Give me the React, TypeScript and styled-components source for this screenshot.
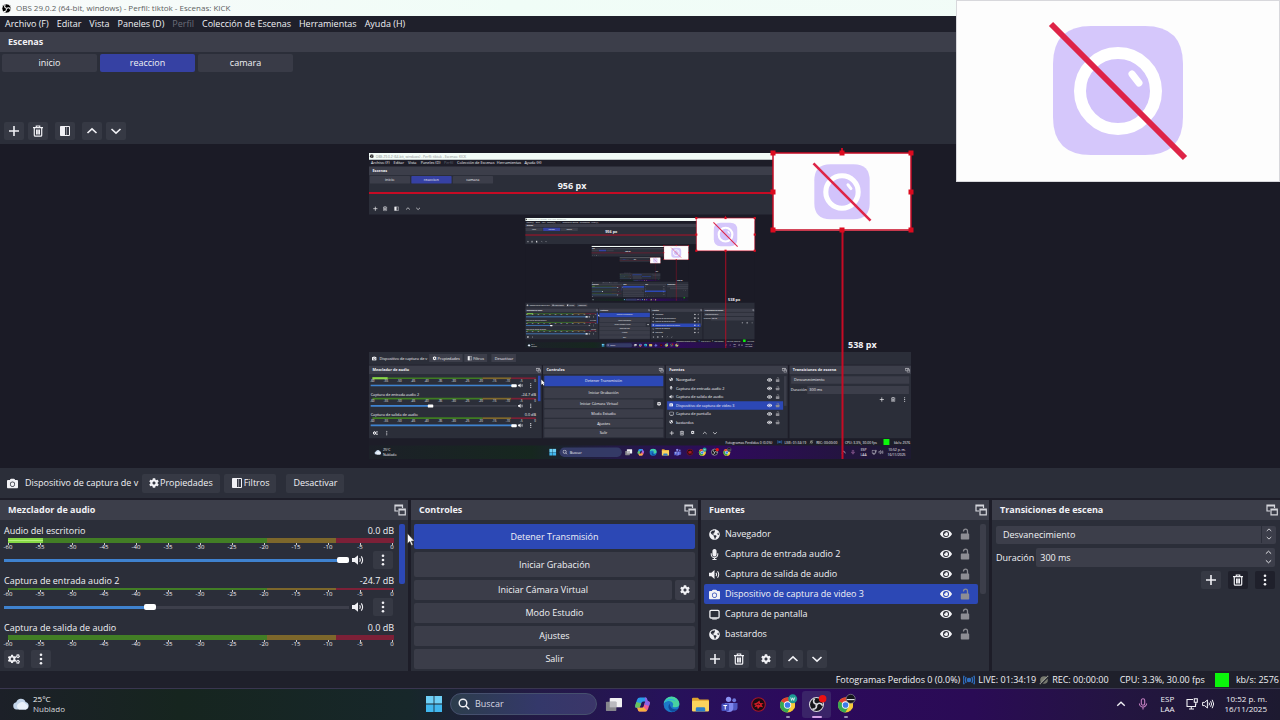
import React, { CSSProperties, ComponentProps, SVGProps, createContext, useContext } from "react";
import styled, { createGlobalStyle, css } from "styled-components";
import { FaCamera, FaCog, FaCogs, FaEye, FaGlobeAmericas, FaMicrophone } from "react-icons/fa";

const c = {
  page: "#1d1d28",
  stage: "#1b1b26",
  dock: "#2b2e39",
  title: "#3c3e4a",
  button: "#3b3d49",
  tool: "#363944",
  accent: "#2c48b5",
  text: "#f1f1f5",
  red: "#c60b24",
};
const uiFont = `"Open Sans", "Noto Sans", sans-serif`;

const GlobalStyle = createGlobalStyle`
  * { box-sizing: border-box; }
  body { margin: 0; background: ${c.page}; color: ${c.text}; font: 9px/12px ${uiFont}; }
  button, input, select { font: inherit; color: inherit; margin: 0; }
  button { border: 0; padding: 0; cursor: pointer; }
  svg { display: block; flex: none; }
`;

/* ---------- icons ---------- */

type IconProps = SVGProps<SVGSVGElement>;
const Icon = ({ size = 12, children, ...rest }: IconProps & { size?: number }) => (
  <svg width={size} height={size} viewBox="0 0 12 12" fill="none" stroke="currentColor" strokeWidth="1.4" aria-hidden="true" {...rest}>
    {children}
  </svg>
);
const PlusIcon = (p: IconProps) => <Icon {...p}><path d="M6 1v10M1 6h10" strokeWidth="1.6" /></Icon>;
const TrashIcon = (p: IconProps) => (
  <Icon {...p}><path d="M1 2.6h10M4.3 2.4V1h3.4v1.4M2.3 3v7.2q0 1 1 1h5.4q1 0 1-1V3M4.6 4.6v4.8M6 4.6v4.8M7.4 4.6v4.8" strokeWidth="1.2" /></Icon>
);
const FilterIcon = (p: IconProps) => (
  <Icon {...p}>
    <path d="M1.5 1.5h9v9h-9z" strokeWidth="1" />
    <path d="M1.5 1.5H6v9H1.5z" fill="currentColor" stroke="none" />
    <path d="M3 3.5v5M7.5 2v8" strokeWidth=".8" opacity=".5" />
  </Icon>
);
const UpIcon = (p: IconProps) => <Icon {...p}><path d="M1.5 8 6 3.8 10.5 8" strokeWidth="1.6" /></Icon>;
const DownIcon = (p: IconProps) => <Icon {...p}><path d="M1.5 4 6 8.2 10.5 4" strokeWidth="1.6" /></Icon>;
const DotsIcon = (p: IconProps) => (
  <Icon {...p}><g fill="currentColor" stroke="none"><circle cx="6" cy="1.8" r="1.3" /><circle cx="6" cy="6" r="1.3" /><circle cx="6" cy="10.2" r="1.3" /></g></Icon>
);
const PopoutIcon = (p: IconProps) => (
  <Icon {...p}><path d="M4 7H1V1h7.5v3M1 2h7.5M5 5h6.3v5.8H5zM5 6h6.3" strokeWidth="1.2" stroke="#d5d6dc" /></Icon>
);
const LockIcon = (p: IconProps) => (
  <Icon {...p}><path d="M4.5 3.6V3.2a2 2 0 0 1 4 0V6" stroke="#8d8d94" strokeWidth="1.3" /><rect x="1.8" y="5.6" width="8.4" height="6" rx=".8" fill="#8d8d94" stroke="none" /></Icon>
);
const DisplayIcon = (p: IconProps) => (
  <Icon {...p}><rect x="1" y="1.4" width="10" height="8.4" rx="1.2" /><path d="M3.5 11h5" strokeWidth="1" /></Icon>
);
const SpeakerIcon = (p: IconProps) => (
  <Icon {...p}><path d="M0 4h2.6L6 1.2v9.6L2.6 8H0z" fill="currentColor" stroke="none" /><path d="M7.6 4.2q1.3 1.8 0 3.6M9.3 2.4q2.6 3.6 0 7.2" strokeWidth="1.1" /></Icon>
);
const SearchIcon = (p: IconProps) => <Icon {...p}><circle cx="5" cy="5" r="3.8" /><path d="m7.8 7.8 3.4 3.4" /></Icon>;
const LiveIcon = (p: IconProps) => (
  <Icon {...p} stroke="#2f6fc0"><circle cx="6" cy="6" r="1.6" fill="#2f6fc0" /><path d="M3.2 3.2q-1.8 2.8 0 5.6M8.8 3.2q1.8 2.8 0 5.6M1.2 1.8q-2.2 4.2 0 8.4M10.8 1.8q2.2 4.2 0 8.4" /></Icon>
);
const IdleIcon = (p: IconProps) => (
  <Icon {...p}><circle cx="6" cy="6" r="4.6" fill="#77796f" stroke="none" /><path d="M1 11 11 1" stroke="#a4a69b" strokeWidth="1.4" /><path d="M2.2 11.4 11.4 2.2" stroke="#22232d" /></Icon>
);
const TrayMicIcon = (p: IconProps) => (
  <Icon {...p} stroke="#c47fc0"><rect x="4.3" y=".8" width="3.4" height="6.4" rx="1.7" strokeWidth="1.1" /><path d="M2.4 5.4a3.6 3.6 0 0 0 7.2 0M6 9v2.6" strokeWidth="1.1" /></Icon>
);
const NetworkIcon = (p: IconProps) => (
  <Icon {...p}><path d="M7 1.5H1v7h8.500V6M3 11h5M5.300 8.500V11M8.300.8h3v3.400h-3zM9.800 4.200V7" strokeWidth="1.1" /></Icon>
);
const TraySpeakerIcon = (p: IconProps) => (
  <Icon {...p}><path d="M.6 4.4h2L5.400 2v8L2.600 7.600h-2zM7 4.600q1 1.400 0 2.800M8.600 3.200q2 2.800 0 5.600M10.200 1.800q3 4.200 0 8.400" strokeWidth="1" /></Icon>
);

const AppArt = (p: IconProps) => <svg width="18" height="18" viewBox="0 0 18 18" aria-hidden="true" {...p} />;
const WindowsLogo = (p: IconProps) => (
  <AppArt {...p}><path d="M1 1h7.6v7.6H1zM9.4 1H17v7.6H9.4z" fill="#6fd0f6" /><path d="M1 9.4h7.6V17H1zM9.4 9.4H17V17H9.4z" fill="#41b7ee" /></AppArt>
);
const TaskViewLogo = (p: IconProps) => (
  <AppArt {...p}><rect x="5" y="2" width="13" height="10" rx="1" fill="#f0f0f2" /><rect x="1" y="6" width="11" height="10" rx="1" fill="#86868c" /><path d="M5 6h7v6H5z" fill="#b9b9be" /></AppArt>
);
const CopilotLogo = (p: IconProps) => (
  <AppArt {...p}>
    <path d="M6.500 1.500h5.500q1.200 0 1.600 1.200l1 3H9.600q-1.300 0-1.800 1.600L6 12.500H3.200q-2.600 0-1.800-2.800l1.800-5.600Q4 1.500 6.500 1.500Z" fill="#2b9bea" />
    <path d="M1.400 9.700 2.500 6.300l5 1.500L6 12.500H3.200q-2.600 0-1.800-2.800Z" fill="#69c45c" />
    <path d="M11.500 16.500H6q-1.200 0-1.600-1.200l-1-2.800h5q1.300 0 1.800-1.600L12 5.500h2.800q2.600 0 1.800 2.800l-1.800 5.600q-.8 2.600-3.300 2.600Z" fill="#ee5f94" />
    <path d="M11.500 16.500H6q-1.200 0-1.600-1.200l-1-2.800h5q1 0 1.500-.9l4 3.900q-1 1-2.400 1Z" fill="#f6b03c" />
    <path d="M12 1.500q1.200 0 1.600 1.200l1 2.800h.2q2.600 0 1.800 2.800l-.7 2.200-4.900-1.500L12 5.500l-.6-4z" fill="#8a63e8" />
  </AppArt>
);
const EdgeLogo = (p: IconProps) => (
  <AppArt {...p}>
    <circle cx="9" cy="9" r="8.3" fill="#1c79c8" />
    <path d="M.8 8A8.300 8.300 0 0 1 17.300 8q.3 4-4.300 4-3.600 0-2.500-2 .8-1.200-.3-2.800Q8.800 5 5.600 5.300 2 5.600.8 8Z" fill="#48d3a0" />
    <path d="M.8 8Q2.500 3.500 7 3q5-.3 6 3Q11 4 8 4.600 2 5.500.8 8Z" fill="#2cb4dd" />
    <path d="M7 8q-3 4 1 8 4 2 7.500-2.500Q12 15 9.300 13 7 11 7 8Z" fill="#104c9c" />
  </AppArt>
);
const FolderLogo = (p: IconProps) => (
  <AppArt {...p}><path d="M0 3q0-1.200 1.200-1.200h5L8 3.600h9q1 0 1 1v3H0z" fill="#e0a32e" /><rect y="5" width="18" height="11.5" rx="1.2" fill="#fbd35d" /><path d="M4 16.500v-3Q4 12 5.500 12h7q1.500 0 1.500 1.500v3z" fill="#2b7fc9" /></AppArt>
);
const TeamsLogo = (p: IconProps) => (
  <AppArt {...p}>
    <circle cx="8" cy="3.5" r="2.8" fill="#8b93f2" /><circle cx="14" cy="4.5" r="2" fill="#6f78dc" />
    <path d="M12 7.500h5.500v4.800q0 3-3 3H12z" fill="#5058c0" /><path d="M4 7.500h9v5q0 4.500-4.500 4.500T4 12.500z" fill="#7f87ee" />
    <rect x=".5" y="8" width="8" height="8" rx="1.2" fill="#4650bd" /><path d="M2.500 10h4M4.500 10v4.300" stroke="#fff" strokeWidth="1.1" />
  </AppArt>
);
const RedLogo = (p: IconProps) => (
  <AppArt {...p}><circle cx="9" cy="9" r="7.2" fill="#1a0c12" stroke="#a5152a" strokeWidth="1.2" /><path d="M3.500 8.500 7.500 6.800l2.500-2 .7 2.600 3.800.2-2.300 1.700 1.700 2.500-3.400-.4L8.300 14 7.500 11 4.600 12l1.500-2.600z" fill="#d21c26" /><path d="m7 9 2-.5 1.500.8" stroke="#1a0c12" fill="none" /></AppArt>
);
const Chrome = () => (
  <g>
    <circle cx="9" cy="9.5" r="8" fill="#f2c12e" />
    <path d="M9 9.500 2.100 5.500A8 8 0 0 1 15.900 5.500Z" fill="#e2412f" /><path d="M9 9.500 2.100 5.500A8 8 0 0 0 9 17.500l3.500-6z" fill="#36a852" />
    <path d="M9 5.500h6.900a8 8 0 0 1 0 8L9 17.500l3.500-6z" fill="#f7ca3a" />
    <circle cx="9" cy="9.5" r="3.9" fill="#fff" /><circle cx="9" cy="9.5" r="3" fill="#3d7be8" />
  </g>
);
const ChromeWorkLogo = (p: IconProps) => (
  <AppArt overflow="visible" {...p}><Chrome /><circle cx="14.5" cy="3" r="4.8" fill="#1d9a93" /><path d="m12.400 1.500 1 3.200 1.100-2.800 1.100 2.800 1-3.200" stroke="#fff" strokeWidth=".8" fill="none" /></AppArt>
);
const ChromeMaskLogo = (p: IconProps) => (
  <AppArt overflow="visible" {...p}><Chrome /><circle cx="14.5" cy="3" r="4.8" fill="#15161c" stroke="#8b8f98" strokeWidth=".7" /><path d="M10.400 3.800h8.200" stroke="#dfe2ea" strokeWidth="1.2" /></AppArt>
);
const ObsMark = ({ bg = "#15151b", fg = "#d9d9de" }) => (
  <g>
    <circle cx="9" cy="9" r="7.4" fill={bg} stroke={fg} strokeWidth="1.1" />
    {[0, 120, 240].map((a) => (
      <path key={a} transform={`rotate(${a} 9 9)`} d="M9.300 8.600Q5.800 8.200 5.900 5.200 6 3.700 7.200 3" stroke={fg} strokeWidth="1.7" fill="none" />
    ))}
  </g>
);
const ObsLogo = (p: IconProps) => <AppArt overflow="visible" {...p}><ObsMark /><circle cx="15.5" cy="3" r="4" fill="#ee1111" /></AppArt>;
const CloudLogo = (p: IconProps) => (
  <AppArt {...p}><path d="M4.500 14.500a3.700 3.700 0 0 1-.3-7.300A5 5 0 0 1 13.600 7a3.900 3.900 0 0 1 .4 7.500z" fill="#c3d5ea" /><path d="M7 14.500a3.500 3.500 0 0 1 .4-6.500 4.300 4.300 0 0 1 6.400.9 2.900 2.900 0 0 1 .2 5.600z" fill="#eaf1fa" /></AppArt>
);

/* Placeholder shown by the camera source while it is off. */
const CameraOff = (p: IconProps) => (
  <svg viewBox="0 0 324 182" role="img" aria-label="Cámara desactivada" {...p}>
    <path fill="#fdfdfd" d="M0 0h324v182H0z" />
    <path d="M135 26h54q38 0 38 38v53q0 38-38 38h-54q-38 0-38-38V64q0-38 38-38Z" fill="#d5c7fb" />
    <circle cx="162" cy="91" r="38" fill="#d2c3fb" stroke="#fff" strokeWidth="12" />
    <path d="m176 74 7 9" stroke="#fff" strokeWidth="7" strokeLinecap="round" />
    <path d="m95 24 134 134" stroke="#de2447" strokeWidth="6" />
  </svg>
);

/* ---------- data ---------- */

const menus = [["Archivo (F)"], ["Editar"], ["Vista"], ["Paneles (D)"], ["Perfil", true], ["Colección de Escenas"], ["Herramientas"], ["Ayuda (H)"]] as [string, boolean?][];
const menuX = [5, 58, 92, 122, 177, 208, 302, 367];
const scenes = ["inicio", "reaccion", "camara"];
const channels = [
  { name: "Audio del escritorio", db: "0.0 dB", value: 100, level: 9, wide: true },
  { name: "Captura de entrada audio 2", db: "-24.7 dB", value: 42, level: 0, wide: false },
  { name: "Captura de salida de audio", db: "0.0 dB", value: 100, level: 0, wide: true },
];
const sources = [
  { name: "Navegador", Glyph: FaGlobeAmericas },
  { name: "Captura de entrada audio 2", Glyph: FaMicrophone },
  { name: "Captura de salida de audio", Glyph: SpeakerIcon },
  { name: "Dispositivo de captura de video 3", Glyph: FaCamera },
  { name: "Captura de pantalla", Glyph: DisplayIcon },
  { name: "bastardos", Glyph: FaGlobeAmericas },
];
const controls = ["Detener Transmisión", "Iniciar Grabación", "Iniciar Cámara Virtual", "Modo Estudio", "Ajustes", "Salir"];
const apps = [
  { name: "Vista de tareas", Logo: TaskViewLogo },
  { name: "Copilot", Logo: CopilotLogo },
  { name: "Edge", Logo: EdgeLogo },
  { name: "Explorador de archivos", Logo: FolderLogo },
  { name: "Teams", Logo: TeamsLogo },
  { name: "Juego", Logo: RedLogo },
  { name: "Chrome trabajo", Logo: ChromeWorkLogo, mark: 4 },
  { name: "OBS", Logo: ObsLogo, mark: 10 },
  { name: "Chrome incógnito", Logo: ChromeMaskLogo, mark: 4 },
];
const ticks = ["-60", "-55", "-50", "-45", "-40", "-35", "-30", "-25", "-20", "-15", "-10", "-5", "0"];
const windowTitle = "OBS 29.0.2 (64-bit, windows) - Perfil: tiktok - Escenas: KICK";

/* ---------- preview: the captured screen, which contains itself ---------- */

const FeedLabel = styled.text<{ $size?: number; $bold?: boolean; $color?: string }>`
  font-family: ${uiFont};
  font-size: ${(p) => p.$size ?? 9}px;
  font-weight: ${(p) => (p.$bold ? 700 : 500)};
  fill: ${(p) => p.$color ?? c.text};
`;
/* The innermost copy is too small for any label to be visible. */
const Legible = createContext(true);
const FeedText = (props: ComponentProps<typeof FeedLabel>) => (useContext(Legible) ? <FeedLabel {...props} /> : null);

const docks = [
  { title: "Mezclador de audio", x: 0, w: 408 },
  { title: "Controles", x: 411, w: 287 },
  { title: "Fuentes", x: 701, w: 288 },
  { title: "Transiciones de escena", x: 993, w: 287 },
];
const buttonRows = [[524, 25], [552, 25], [580, 20], [603, 20], [626, 20], [649, 20]];

const Screen = ({ depth }: { depth: number }) => (
  <Legible.Provider value={depth > 0}>
    <path fill={c.page} d="M0 0h1280v720H0z" />
    <path fill="#f3fcf8" d="M0 0h1280v16H0z" />
    <path fill={c.title} d="M0 32h1280v20H0z" />
    <path fill={c.dock} d="M0 52h1280v93H0zM0 468h1280v30H0zM0 520h408v151H0zM411 520h287v151H411zM701 520h288v151H701zM993 520h287v151H993z" />
    <path fill={c.stage} d="M0 145h1280v323H0z" />
    <svg x="1" y="2" width="11" height="11" viewBox="0 0 18 18"><ObsMark bg="#000" fg="#fff" /></svg>
    <FeedText x="16" y="11" $size={8} $color="#888c8c">{windowTitle}</FeedText>
    {menus.map(([m, off], i) => <FeedText key={m} x={menuX[i]} y="27" $color={off ? "#666874" : undefined}>{m}</FeedText>)}
    <FeedText x="8" y="45" $bold>Escenas</FeedText>
    {scenes.map((s, i) => (
      <g key={s}>
        <rect x={2 + i * 98} y="54" width="95" height="18" rx="2" fill={i === 1 ? "#3641a3" : c.title} />
        <FeedText x={49 + i * 98} y="66" textAnchor="middle">{s}</FeedText>
      </g>
    ))}
    {[PlusIcon, TrashIcon, FilterIcon, UpIcon, DownIcon].map((G, i) => <G key={i} x={[9, 32, 59, 86, 110][i]} y="125" />)}

    <FaCamera x={7} y={478} size={11} />
    <FeedText x="25" y="486">Dispositivo de captura de v</FeedText>
    <path fill={c.title} d="M142 473h79v19h-79zM225 473h54v19h-54zM289 473h58v19h-58z" />
    <FaCog x={150} y={478} size={10} /><FilterIcon x="232" y="477" />
    <FeedText x="162" y="486">Propiedades</FeedText>
    <FeedText x="246" y="486">Filtros</FeedText>
    <FeedText x="297" y="486">Desactivar</FeedText>

    {docks.map((d) => (
      <g key={d.title}>
        <rect x={d.x} y="500" width={d.w} height="20" fill={c.title} />
        <FeedText x={d.x + 8} y="514" $bold>{d.title}</FeedText>
        <PopoutIcon x={d.x + d.w - 14} y="505" />
      </g>
    ))}
    {channels.map((ch, i) => {
      const y = [528, 576, 622][i];
      return (
        <g key={ch.name}>
          {i > 0 && <FeedText x="4" y={y - 4}>{ch.name}</FeedText>}
          {i > 0 && <FeedText x="394" y={y - 4} textAnchor="end">{ch.db}</FeedText>}
          <path d={`M8 ${y + 2}h260`} stroke="#3f7d22" strokeWidth="4" />
          <path d={`M268 ${y + 2}h68`} stroke="#80682a" strokeWidth="4" />
          <path d={`M336 ${y + 2}h58`} stroke="#7d1f35" strokeWidth="4" />
          {i === 0 && <path d="M8 530h36" stroke="#8bd84a" strokeWidth="5" />}
          {ticks.map((t, n) => <FeedText key={t} x={8 + n * 32} y={y + 11} $size={7} textAnchor="middle">{t}</FeedText>)}
          <path d={`M4 ${y + 19}h345`} stroke="#444653" strokeWidth="3" />
          <path d={`M4 ${y + 19}h${3.4 * ch.value}`} stroke="#3f83d0" strokeWidth="4" />
          <rect x={3.4 * ch.value - 4} y={y + 16} width="13" height="7" rx="2" fill="#fff" />
          <SpeakerIcon x="352" y={y + 13} /><DotsIcon x="376" y={y + 13} />
        </g>
      );
    })}
    <path fill={c.accent} d="M399 524h6v60h-6z" />
    <FaCogs x={9} y={653} size={12} /><DotsIcon x="36" y="653" />

    {controls.map((label, i) => (
      <g key={label}>
        <rect x="414" y={buttonRows[i][0]} width={i === 2 ? 258 : 281} height={buttonRows[i][1]} rx="2" fill={i ? c.button : c.accent} />
        <FeedText x={i === 2 ? 543 : 554} y={buttonRows[i][0] + buttonRows[i][1] / 2 + 3} textAnchor="middle">{label}</FeedText>
      </g>
    ))}
    <FaCog x={680} y={585} size={10} />

    <path fill={c.accent} d="M704 584h274v20H704z" />
    <path fill={c.title} d="M980 525h6v70h-6z" />
    {sources.map(({ name, Glyph }, i) => (
      <g key={name}>
        <Glyph x={709} y={528 + i * 20} width={11} height={11} />
        <FeedText x="725" y={537 + i * 20}>{name}</FeedText>
        <FaEye x={940} y={528 + i * 20} size={12} /><LockIcon x="959" y={527 + i * 20} />
      </g>
    ))}
    {[PlusIcon, TrashIcon, FaCog, UpIcon, DownIcon].map((G, i) => <G key={i} x={[709, 733, 760, 787, 811][i]} y={653} width={12} height={12} />)}

    <path fill={c.title} d="M997 525h279v18H997zM1035 548h240v19h-240z" />
    <FeedText x="1004" y="537">Desvanecimiento</FeedText>
    <FeedText x="996" y="561">Duración</FeedText>
    <FeedText x="1040" y="561">300 ms</FeedText>
    <PlusIcon x="1205" y="574" /><TrashIcon x="1232" y="574" /><DotsIcon x="1259" y="574" />

    <FeedText x="842" y="684" $size={8}>Fotogramas Perdidos 0 (0.0%)</FeedText>
    <LiveIcon x="964" y="674" />
    <FeedText x="981" y="684" $size={8}>LIVE: 01:34:19</FeedText>
    <IdleIcon x="1040" y="675" width="10" height="10" />
    <FeedText x="1056" y="684" $size={8}>REC: 00:00:00</FeedText>
    <FeedText x="1124" y="684" $size={8}>CPU: 3.3%, 30.00 fps</FeedText>
    <path fill="#0bf50b" d="M1215 673h14v14h-14z" />
    <FeedText x="1240" y="684" $size={8}>kb/s: 2576</FeedText>

    <path fill="url(#bar)" d="M0 688h1280v32H0z" />
    <CloudLogo x="12" y="695" />
    <FeedText x="33" y="702" $size={8}>25°C</FeedText>
    <FeedText x="33" y="712" $size={8}>Nublado</FeedText>
    <WindowsLogo x="425" y="695" />
    <rect x="450" y="693" width="147" height="22" rx="11" fill="#343a66" />
    <SearchIcon x="457" y="698" />
    <FeedText x="474" y="708">Buscar</FeedText>
    {apps.map(({ name, Logo }, i) => <Logo key={name} x={604 + i * 29} y="695" />)}
    <UpIcon x="1115" y="698" /><TrayMicIcon x="1137" y="698" /><NetworkIcon x="1187" y="698" /><TraySpeakerIcon x="1203" y="698" />
    <FeedText x="1168" y="702" $size={8} textAnchor="middle">ESP</FeedText>
    <FeedText x="1168" y="712" $size={8} textAnchor="middle">LAA</FeedText>
    <FeedText x="1267" y="702" $size={8} textAnchor="end">10:52 p. m.</FeedText>
    <FeedText x="1267" y="712" $size={8} textAnchor="end">16/11/2025</FeedText>

    {depth > 0 && <Preview x="369" y="153" width="542" height="306" depth={depth - 1} />}
    <CameraOff x="956" y="0" width="324" height="182" />
    <path d="M407 533v12l3-2 2 4 2-1-2-4h3z" fill="#fff" />
  </Legible.Provider>
);

const handles = [[404, 0], [473, 0], [542, 0], [404, 39], [542, 39], [404, 77], [473, 77], [542, 77]];

const Preview = ({ depth, ...rest }: IconProps & { depth: number }) => (
  <svg viewBox="0 0 542 306" overflow="visible" color={c.text} {...rest}>
    <svg width="542" height="306" viewBox="0 0 1280 720" preserveAspectRatio="none"><Screen depth={depth} /></svg>
    <CameraOff x="404" y="0" width="138" height="78" />
    <path d="M0 40h404M473.500 77v229M473 0v-5" stroke={c.red} strokeWidth="2" fill="none" />
    <path d="M404 0h138v77H404z" stroke={c.red} strokeWidth="1.5" fill="none" />
    {handles.map(([x, y]) => <rect key={`${x},${y}`} x={x - 2.5} y={y - 2.5} width="5" height="5" fill="#dc0a1e" />)}
    <FeedText x="203" y="36" textAnchor="middle" $bold>956 px</FeedText>
    <FeedText x="479" y="195" $bold>538 px</FeedText>
  </svg>
);

/* ---------- layout ---------- */

const Page = styled.div`
  position: relative;
  display: flex;
  flex-direction: column;
  min-height: 100vh;
`;
const TitleBar = styled.header`
  display: flex;
  align-items: center;
  gap: 4px;
  height: 16px;
  padding: 0 1px;
  background: linear-gradient(90deg, #f8fafa, #f0fdf7 40%, #f3fbf8);
  color: #5c5f61;
  font-size: 8px;
`;
const MenuBar = styled.nav`
  display: flex;
  align-items: center;
  gap: 8px;
  height: 16px;
  padding: 0 5px;
  background: #1f202b;
`;
const MenuItem = styled.button`
  background: none;
  &:disabled { color: #6b6d78; }
`;
const DockTitle = styled.h2`
  display: flex;
  align-items: center;
  justify-content: space-between;
  height: 20px;
  margin: 0;
  padding: 0 2px 0 8px;
  background: ${c.title};
  font-size: 9px;
  font-weight: 700;
`;
const ScenesDock = styled.section`
  padding-bottom: 1px;
  background: ${c.dock};
`;
const SceneList = styled.div`
  display: flex;
  gap: 3px;
  min-height: 68px;
  align-items: flex-start;
  padding: 2px;
`;
const SceneButton = styled.button<{ $on: boolean }>`
  width: 95px;
  height: 18px;
  border-radius: 2px;
  background: ${(p) => (p.$on ? "#3641a3" : "#393b47")};
`;
const Toolbar = styled.div`
  display: flex;
  gap: 4px;
  padding: 2px 5px 3px 4px;
  margin-top: auto;
`;
const ToolButton = styled.button<{ $gap?: boolean; $tone?: string }>`
  display: grid;
  place-items: center;
  flex: none;
  width: 20px;
  height: 18px;
  border-radius: 2px;
  margin-left: ${(p) => (p.$gap ? 3 : 0)}px;
  background: ${(p) => p.$tone ?? c.tool};
`;
const Stage = styled.main`
  flex: 1;
  padding: 9px 0;
  background: ${c.stage};
`;
const StageView = styled(Preview)`
  width: 100%;
  height: max(306px, calc(100vh - 414px));
`;
const SourceBar = styled.div`
  display: flex;
  align-items: center;
  gap: 4px;
  height: 30px;
  margin-bottom: 2px;
  padding: 0 7px;
  background: ${c.dock};
`;
const SourceName = styled.span`
  width: 116px;
  padding-left: 3px;
  white-space: nowrap;
`;
const BarButton = styled.button<{ $gap?: boolean }>`
  display: flex;
  align-items: center;
  justify-content: center;
  gap: 1px;
  height: 19px;
  padding: 0 7px;
  border-radius: 2px;
  margin-left: ${(p) => (p.$gap ? 6 : 0)}px;
  background: ${c.tool};
`;
const Docks = styled.div`
  display: grid;
  grid-template-columns: 408fr 287fr 288fr 288fr;
  gap: 3px;
`;
const Dock = styled.section`
  display: flex;
  flex-direction: column;
  min-width: 0;
  background: ${c.dock};
`;
const ScrollArea = styled.div`
  display: flex;
  flex: 1 1 0;
  min-height: 0;
  overflow: hidden;
  padding: 4px 3px 0;
`;
const ScrollThumb = styled.div<{ $tone: string; $height: number }>`
  width: 6px;
  height: ${(p) => p.$height}px;
  border-radius: 2px;
  background: ${(p) => p.$tone};
`;
const ChannelList = styled.div`
  flex: 1;
  min-width: 0;
  margin-right: 5px;
`;
const Channel = styled.div`
  padding: 0 0 5px 1px;
`;
const ChannelHead = styled.div`
  display: flex;
  justify-content: space-between;
  height: 14px;
  line-height: 14px;
`;
const Meter = styled.div<{ $wide: boolean }>`
  height: ${(p) => (p.$wide ? 5 : 2)}px;
  margin-left: 4px;
  background: linear-gradient(90deg, #427e25 67%, #7d672b 67% 85%, #7c2037 85%);
`;
const MeterLevel = styled.div`
  height: 5px;
  background: linear-gradient(#86d845 2px, #b4f07a 2px 3px, #86d845 3px);
`;
const Scale = styled.div`
  display: flex;
  justify-content: space-between;
  height: 8px;
  margin: 0 -4px 0 -2px;
  font-size: 6px;
  line-height: 9px;
`;
const Tick = styled.span`
  width: 12px;
  text-align: center;
  background: linear-gradient(#c9cad0, #c9cad0) center top / 1px 2px no-repeat;
`;
const Fader = styled.div`
  display: flex;
  align-items: center;
  height: 18px;
  gap: 3px;
`;
const Range = styled.input`
  flex: 1;
  min-width: 0;
  height: 6px;
  appearance: none;
  background: linear-gradient(90deg, #3f82cf var(--fill), #3d3f4b var(--fill)) center / 100% 3px no-repeat;
  &::-webkit-slider-thumb {
    appearance: none;
    width: 12px;
    height: 6px;
    border-radius: 2px;
    background: #fff;
  }
`;
const MixerMenu = styled(ToolButton)`
  margin: 0 1px 0 6px;
`;
const ControlStack = styled.div`
  display: flex;
  flex-direction: column;
  gap: 3px;
  padding: 4px 3px 2px;
`;
const ControlRow = styled.div`
  display: flex;
  gap: 3px;
`;
const ControlButton = styled.button<{ $tall?: boolean; $on?: boolean }>`
  flex: 1 0 auto;
  height: ${(p) => (p.$tall ? 25 : 20)}px;
  border-radius: 2px;
  background: ${(p) => (p.$on ? c.accent : c.button)};
`;
const SquareButton = styled(ToolButton)`
  height: 20px;
  background: ${c.button};
`;
const SourceList = styled.ul`
  flex: 1;
  min-width: 0;
  margin: 0 2px 0 0;
  padding: 0;
  list-style: none;
`;
const SourceRow = styled.li<{ $on: boolean }>`
  display: flex;
  align-items: center;
  gap: 5px;
  height: 20px;
  padding: 0 6px 0 4px;
  border-radius: 2px;
  ${(p) => p.$on && css`background: ${c.accent};`}
`;
const SourceGlyph = styled.span`
  display: grid;
  place-items: center;
  width: 12px;
`;
const SourceLabel = styled.span`
  flex: 1;
`;
const PlainButton = styled.button`
  display: grid;
  place-items: center;
  width: 14px;
  height: 14px;
  background: none;
`;
const Form = styled.form`
  display: flex;
  flex-direction: column;
  gap: 4px;
  padding: 5px 4px 0;
`;
const Field = styled.div`
  display: flex;
  align-items: center;
  position: relative;
  gap: 2px;
  height: 19px;
`;
const Select = styled.select`
  appearance: none;
  flex: 1;
  height: 18px;
  padding: 0 7px;
  border: 0;
  border-radius: 2px;
  background: ${c.title};
`;
const NumberBox = styled.input`
  flex: 1;
  min-width: 0;
  height: 19px;
  margin-right: 1px;
  padding: 0 4px;
  border: 0;
  border-radius: 2px;
  background: ${c.title};
`;
const Stepper = styled.span<{ $line?: boolean }>`
  position: absolute;
  right: 1px;
  top: 0;
  display: grid;
  place-items: center;
  align-content: space-evenly;
  width: 14px;
  height: 18px;
  pointer-events: none;
  border-left: ${(p) => (p.$line ? "1px solid #2b2e39" : "0")};
`;
const FormTools = styled.div`
  display: flex;
  justify-content: flex-end;
  gap: 7px;
  padding-right: 1px;
`;
const StatusBar = styled.div`
  display: flex;
  align-items: center;
  justify-content: flex-end;
  height: 17px;
  padding-right: 1px;
  background: #1f202b;
`;
const StatusItem = styled.span<{ $gap: number }>`
  margin-left: ${(p) => p.$gap}px;
  white-space: nowrap;
`;
const Health = styled.span`
  width: 14px;
  height: 14px;
  margin-left: 10px;
  background: #0bf50b;
`;
const Taskbar = styled.footer`
  display: grid;
  grid-template-columns: 1fr auto 1fr;
  align-items: center;
  height: 32px;
  padding: 0 13px 1px 12px;
  border-top: 1px solid #3a3650;
  background: linear-gradient(90deg, #1c2028, #16251f 14%, #17272a 32%, #231a46 42%, #26125a 52%, #2c0a5c 62%, #2a0b55 76%, #231540 88%, #1d1a30);
  font-size: 8px;
  line-height: 10px;
`;
const Weather = styled.div`
  display: flex;
  align-items: center;
  gap: 3px;
`;
const Muted = styled.div`
  color: #d5d8dc;
`;
const AppRow = styled.div`
  display: flex;
  align-items: center;
`;
const AppButton = styled.button<{ $active?: boolean }>`
  position: relative;
  display: grid;
  place-items: center;
  width: 29px;
  height: 27px;
  border-radius: 3px;
  background: ${(p) => (p.$active ? "#3a2468" : "none")};
`;
const RunMark = styled.span<{ $width: number }>`
  position: absolute;
  bottom: 0;
  width: ${(p) => p.$width}px;
  height: 2px;
  border-radius: 1px;
  background: ${(p) => (p.$width > 4 ? "#d3a2e6" : "#9b8fb4")};
`;
const SearchBox = styled.label`
  display: flex;
  align-items: center;
  gap: 5px;
  width: 147px;
  height: 22px;
  margin: 0 2px;
  padding: 0 7px;
  border: 1px solid #46506e;
  border-radius: 11px;
  background: linear-gradient(90deg, #2c3d4c, #34386a 60%, #3b3669);
`;
const SearchInput = styled.input`
  width: 100%;
  min-width: 0;
  padding: 0;
  border: 0;
  background: none;
  font-size: 9px;
  &::placeholder { color: #d5d7e2; opacity: 1; }
`;
const Tray = styled.div`
  display: flex;
  align-items: center;
  justify-content: flex-end;
  gap: 11px;
`;
const TrayText = styled.div<{ $right?: boolean }>`
  text-align: ${(p) => (p.$right ? "right" : "center")};
`;
const TrayPair = styled.div`
  display: flex;
  gap: 4px;
`;
const CameraWindow = styled.aside`
  position: absolute;
  top: 0;
  right: 0;
  width: 324px;
  outline: 1px solid #d8d8dc;
  outline-offset: -1px;
  & > svg { width: 100%; height: auto; }
`;
const Pointer = styled.svg`
  position: absolute;
  left: 407px;
  bottom: 174px;
`;

const Title = ({ children }: { children: string }) => (
  <DockTitle>{children}<PopoutIcon /></DockTitle>
);

export default function App() {
  return (
    <Page>
      <GlobalStyle />
      <TitleBar>
        <svg width="11" height="11" viewBox="0 0 18 18" aria-hidden="true"><ObsMark bg="#000" fg="#fff" /></svg>
        {windowTitle}
      </TitleBar>
      <MenuBar>
        {menus.map(([m, off]) => <MenuItem key={m} disabled={off}>{m}</MenuItem>)}
      </MenuBar>
      <ScenesDock>
        <DockTitle>Escenas</DockTitle>
        <SceneList>
          {scenes.map((s) => <SceneButton key={s} $on={s === "reaccion"}>{s}</SceneButton>)}
        </SceneList>
        <Toolbar>
          <ToolButton aria-label="Añadir escena"><PlusIcon /></ToolButton>
          <ToolButton aria-label="Eliminar escena"><TrashIcon /></ToolButton>
          <ToolButton aria-label="Filtros de escena" $gap><FilterIcon /></ToolButton>
          <ToolButton aria-label="Subir escena" $gap><UpIcon /></ToolButton>
          <ToolButton aria-label="Bajar escena"><DownIcon /></ToolButton>
        </Toolbar>
      </ScenesDock>

      <Stage>
        <svg width="0" height="0" style={{ position: "absolute" }} aria-hidden="true">
          <linearGradient id="bar"><stop offset="0" stopColor="#1c2028" /><stop offset=".3" stopColor="#16271f" /><stop offset=".45" stopColor="#231a46" /><stop offset=".65" stopColor="#2f0a5c" /><stop offset="1" stopColor="#1d1a30" /></linearGradient>
        </svg>
        <StageView depth={3} role="img" aria-label="Vista previa" />
      </Stage>

      <SourceBar>
        <FaCamera size={11} />
        <SourceName>Dispositivo de captura de v</SourceName>
        <BarButton><FaCog size={10} />Propiedades</BarButton>
        <BarButton><FilterIcon />Filtros</BarButton>
        <BarButton $gap>Desactivar</BarButton>
      </SourceBar>

      <Docks>
        <Dock>
          <Title>Mezclador de audio</Title>
          <ScrollArea>
            <ChannelList>
              {channels.map((ch) => (
                <Channel key={ch.name}>
                  <ChannelHead><span>{ch.name}</span><span>{ch.db}</span></ChannelHead>
                  <Meter $wide={ch.wide}>{ch.level > 0 && <MeterLevel style={{ width: `${ch.level}%` }} />}</Meter>
                  <Scale>{ticks.map((t) => <Tick key={t}>{t}</Tick>)}</Scale>
                  <Fader>
                    <Range type="range" aria-label={ch.name} defaultValue={ch.value} style={{ "--fill": `${ch.value}%` } as CSSProperties} />
                    <SpeakerIcon />
                    <MixerMenu aria-label={`Opciones de ${ch.name}`}><DotsIcon /></MixerMenu>
                  </Fader>
                </Channel>
              ))}
            </ChannelList>
            <ScrollThumb $tone={c.accent} $height={60} />
          </ScrollArea>
          <Toolbar>
            <ToolButton aria-label="Propiedades avanzadas"><FaCogs size={12} /></ToolButton>
            <ToolButton aria-label="Menú del mezclador" $gap><DotsIcon /></ToolButton>
          </Toolbar>
        </Dock>

        <Dock>
          <Title>Controles</Title>
          <ControlStack>
            {controls.map((label, i) => (
              <ControlRow key={label}>
                <ControlButton $tall={i < 2} $on={i === 0}>{label}</ControlButton>
                {i === 2 && <SquareButton aria-label="Configurar cámara virtual"><FaCog size={10} /></SquareButton>}
              </ControlRow>
            ))}
          </ControlStack>
        </Dock>

        <Dock>
          <Title>Fuentes</Title>
          <ScrollArea>
            <SourceList>
              {sources.map(({ name, Glyph }, i) => (
                <SourceRow key={name} $on={i === 3}>
                  <SourceGlyph><Glyph size={11} /></SourceGlyph>
                  <SourceLabel>{name}</SourceLabel>
                  <PlainButton aria-label={`Visibilidad de ${name}`}><FaEye size={12} /></PlainButton>
                  <PlainButton aria-label={`Bloquear ${name}`}><LockIcon /></PlainButton>
                </SourceRow>
              ))}
            </SourceList>
            <ScrollThumb $tone={c.title} $height={70} />
          </ScrollArea>
          <Toolbar>
            <ToolButton aria-label="Añadir fuente"><PlusIcon /></ToolButton>
            <ToolButton aria-label="Eliminar fuente"><TrashIcon /></ToolButton>
            <ToolButton aria-label="Propiedades de la fuente" $gap><FaCog size={10} /></ToolButton>
            <ToolButton aria-label="Subir fuente" $gap><UpIcon /></ToolButton>
            <ToolButton aria-label="Bajar fuente"><DownIcon /></ToolButton>
          </Toolbar>
        </Dock>

        <Dock>
          <Title>Transiciones de escena</Title>
          <Form>
            <Field>
              <Select aria-label="Transición"><option>Desvanecimiento</option></Select>
              <Stepper $line><UpIcon width={6} height={6} /><DownIcon width={6} height={6} /></Stepper>
            </Field>
            <Field>
              <label htmlFor="duration">Duración</label>
              <NumberBox id="duration" defaultValue="300 ms" />
              <Stepper><UpIcon width={7} height={7} /><DownIcon width={7} height={7} /></Stepper>
            </Field>
            <FormTools>
              <ToolButton type="button" aria-label="Añadir transición"><PlusIcon /></ToolButton>
              <ToolButton type="button" aria-label="Eliminar transición" $tone="#1f202b"><TrashIcon /></ToolButton>
              <ToolButton type="button" aria-label="Opciones de transición" $tone="#1f202b"><DotsIcon /></ToolButton>
            </FormTools>
          </Form>
        </Dock>
      </Docks>

      <StatusBar>
        <StatusItem $gap={0}>Fotogramas Perdidos 0 (0.0%)</StatusItem>
        <StatusItem $gap={3}><LiveIcon /></StatusItem>
        <StatusItem $gap={3}>LIVE: 01:34:19</StatusItem>
        <StatusItem $gap={3}><IdleIcon width={10} height={10} /></StatusItem>
        <StatusItem $gap={3}>REC: 00:00:00</StatusItem>
        <StatusItem $gap={11}>CPU: 3.3%, 30.00 fps</StatusItem>
        <Health />
        <StatusItem $gap={7}>kb/s: 2576</StatusItem>
      </StatusBar>

      <Taskbar>
        <Weather>
          <CloudLogo />
          <div><div>25°C</div><Muted>Nublado</Muted></div>
        </Weather>
        <AppRow>
          <AppButton aria-label="Inicio"><WindowsLogo /></AppButton>
          <SearchBox><SearchIcon /><SearchInput placeholder="Buscar" aria-label="Buscar" /></SearchBox>
          {apps.map(({ name, Logo, mark }) => (
            <AppButton key={name} aria-label={name} $active={name === "OBS"}>
              <Logo width="17" height="17" />
              {mark && <RunMark $width={mark} />}
            </AppButton>
          ))}
        </AppRow>
        <Tray>
          <UpIcon width={10} height={10} />
          <TrayMicIcon />
          <TrayText>ESP<br />LAA</TrayText>
          <TrayPair><NetworkIcon /><TraySpeakerIcon /></TrayPair>
          <TrayText $right>10:52 p. m.<br />16/11/2025</TrayText>
        </Tray>
      </Taskbar>

      <CameraWindow><CameraOff /></CameraWindow>
      <Pointer width="8" height="13" viewBox="0 0 8 13" aria-hidden="true"><path d="M.5.5v10l2.300-2 1.700 4 1.500-.7-1.600-3.800h3z" fill="#fff" stroke="#333" strokeWidth=".5" /></Pointer>
    </Page>
  );
}
